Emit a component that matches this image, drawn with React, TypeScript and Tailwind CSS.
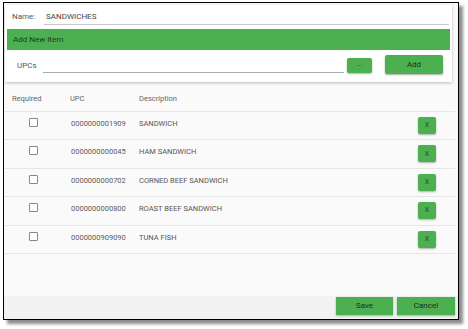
import React from "react";

const rows = [
  { upc: "0000000001909", desc: "SANDWICH" },
  { upc: "0000000000045", desc: "HAM SANDWICH" },
  { upc: "0000000000702", desc: "CORNED BEEF SANDWICH" },
  { upc: "0000000000800", desc: "ROAST BEEF SANDWICH" },
  { upc: "0000000909090", desc: "TUNA FISH" },
];

export default function App() {
  return (
    <div className="w-[468px] h-[329px] bg-white pl-[3px] pt-[2px]" style={{ fontFamily: "Roboto, 'Liberation Sans', sans-serif" }}>
      <div className="w-[456px] h-[318px] border border-black bg-[#fafafa] flex flex-col overflow-hidden shadow-[4px_4px_3px_rgba(0,0,0,0.45)]">
        {/* top card */}
        <div className="ml-[1px] mr-[6px] mt-[2px] bg-white shadow-[0_1px_3px_rgba(0,0,0,0.25)] flex flex-col">
          <div className="h-[23px] flex items-center pl-[7px] pt-[1px]">
            <span className="text-[8px] text-[#555] w-[32px]">Name:</span>
            <div className="flex-1 mr-[3px] h-[16px] border-b border-[#c8c8c8] flex items-center pl-[2px] text-[8px] text-[#444]">SANDWICHES</div>
          </div>
          <div className="mx-[2px] mt-[1px] h-[21px] bg-[#4caf50] flex items-center pl-[6px] text-[8px] text-[#1d3d1d]">Add New Item</div>
          <div className="h-[32px] flex items-start pl-[12px]">
            <span className="text-[8px] text-[#555] w-[26px] mt-[10px]">UPCs</span>
            <div className="w-[301px] h-[23px] border-b border-[#aaa]"></div>
            <div className="ml-[3px] mt-[8px] w-[25px] h-[15px] bg-[#4caf50] rounded-[2px] shadow-[0_1px_2px_rgba(0,0,0,0.3)] flex items-center justify-center text-[7px] text-[#333] leading-none pb-[2px]">...</div>
            <div className="ml-[13px] mt-[5px] w-[58px] h-[19px] bg-[#4caf50] rounded-[2px] shadow-[0_1px_2px_rgba(0,0,0,0.35)] flex items-center justify-center text-[8px] text-[#1d2d1d]">Add</div>
          </div>
        </div>
        {/* table */}
        <div className="mr-[3px] flex flex-col text-[7.5px]">
          <div className="h-[30px] border-b border-[#e6e6e6] flex items-center pt-[4px] text-[#666]">
            <div className="w-[62px] pl-[8px]">Required</div>
            <div className="w-[72px] pl-[4px]">UPC</div>
            <div className="flex-1 pl-[1px]">Description</div>
          </div>
          {rows.map((r) => (
            <div key={r.upc} className="h-[28.4px] border-b border-[#e6e6e6] flex items-start relative">
              <div className="w-[62px] pl-[25px] pt-[6px]">
                <div className="w-[9px] h-[9px] border border-[#888] bg-white rounded-[1px]"></div>
              </div>
              <div className="w-[72px] pl-[5px] pt-[6px] text-[#5c5c5c]">{r.upc}</div>
              <div className="flex-1 pl-[1px] pt-[6px] text-[#555]">{r.desc}</div>
              <div className="mr-[19px] mt-[5px] w-[18px] h-[17px] bg-[#4caf50] rounded-[2px] shadow-[0_1px_2px_rgba(0,0,0,0.3)] flex items-center justify-center text-[7px] text-[#2d4d2d]">X</div>
            </div>
          ))}
        </div>
        <div className="flex-1"></div>
        <div className="h-[23px] bg-[#f2f2f2] flex justify-end items-start pr-[3px]">
          <div className="mt-[1px] w-[57px] h-[18px] bg-[#4caf50] shadow-[0_1px_2px_rgba(0,0,0,0.3)] flex items-center justify-center text-[8px] text-[#1d2d1d]">Save</div>
          <div className="ml-[4px] mt-[1px] w-[58px] h-[18px] bg-[#4caf50] shadow-[0_1px_2px_rgba(0,0,0,0.3)] flex items-center justify-center text-[8px] text-[#1d2d1d]">Cancel</div>
        </div>
      </div>
    </div>
  );
}
